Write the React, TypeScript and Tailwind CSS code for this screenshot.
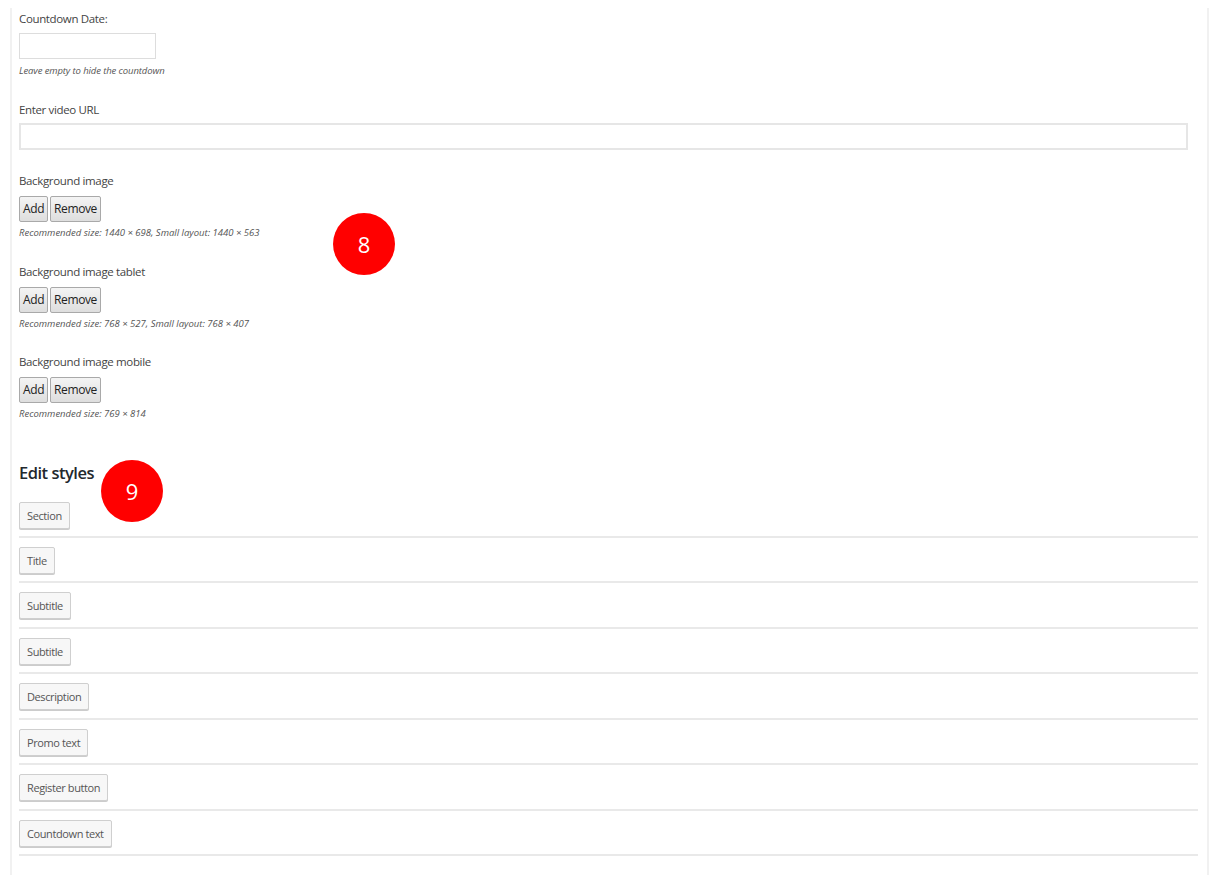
const font = { fontFamily: '"Open Sans", "Noto Sans", Arial, sans-serif' };

const styleItems = [
  "Section",
  "Title",
  "Subtitle",
  "Subtitle",
  "Description",
  "Promo text",
  "Register button",
  "Countdown text",
];

const images = [
  { label: "Background image", hint: "Recommended size: 1440 × 698, Small layout: 1440 × 563" },
  { label: "Background image tablet", hint: "Recommended size: 768 × 527, Small layout: 768 × 407" },
  { label: "Background image mobile", hint: "Recommended size: 769 × 814" },
];

const MediaButton = ({ children }: { children: string }) => (
  <button className="h-[26px] rounded-[2px] border border-[#a9a9a9] bg-gradient-to-b from-[#f4f4f4] to-[#dedede] px-[3px] text-[12px] leading-none tracking-[-0.4px] text-[#222]">
    {children}
  </button>
);

const Badge = ({ n, className }: { n: string; className: string }) => (
  <div
    className={`absolute flex h-[62px] w-[62px] items-center justify-center rounded-full bg-[#ff0000] text-[22px] text-white ${className}`}
  >
    {n}
  </div>
);

export default function App() {
  return (
    <div className="min-h-[886px] bg-white pt-2" style={font}>
      <div className="relative ml-[10px] mr-[5px] h-[867px] border-x-2 border-[#f1f1f1] pl-[7px] pr-[9px] text-[#444]">
        <div className="pt-[2px] text-[11.5px] leading-[17px] tracking-[-0.35px]">Countdown Date:</div>
        <div className="mt-[6px] h-[26px] w-[137px] border border-[#dddddd]" />
        <div className="mt-[5px] text-[9.5px] italic leading-[13px] tracking-[-0.1px] text-[#555]">
          Leave empty to hide the countdown
        </div>

        <div className="mt-[24px] text-[11.5px] leading-[17px] tracking-[-0.35px]">Enter video URL</div>
        <div className="mr-[10px] mt-[5px] h-[27px] border-2 border-[#e6e6e6]" />

        {images.map((im, i) => (
          <div key={im.label} className={i === 0 ? "mt-[22px]" : "mt-[23.5px]"}>
            <div className="text-[11.5px] leading-[17px] tracking-[-0.35px]">{im.label}</div>
            <div className="mt-[7px] flex gap-[2px]">
              <MediaButton>Add</MediaButton>
              <MediaButton>Remove</MediaButton>
            </div>
            <div className="mt-[4px] text-[9.5px] italic leading-[13px] text-[#555]">{im.hint}</div>
          </div>
        ))}

        <h2 className="mt-[41.5px] text-[16.5px] font-semibold leading-[22px] tracking-[-0.5px] text-[#23282d]">
          Edit styles
        </h2>
        <div className="mt-[18px]">
          {styleItems.map((s, i) => (
            <div key={i} className="border-b-2 border-[#e9e9e9] pb-[7.45px] pt-[9px] first:pt-0">
              <button className="h-[27px] rounded-[2px] border border-[#cfcfcf] bg-[#f7f7f7] px-[7px] text-[11px] leading-none tracking-[-0.4px] text-[#555] shadow-[0_1px_0_#ccc]">
                {s}
              </button>
            </div>
          ))}
        </div>

        <Badge n="8" className="left-[321px] top-[205px]" />
        <Badge n="9" className="left-[89px] top-[452px]" />
      </div>
    </div>
  );
}
